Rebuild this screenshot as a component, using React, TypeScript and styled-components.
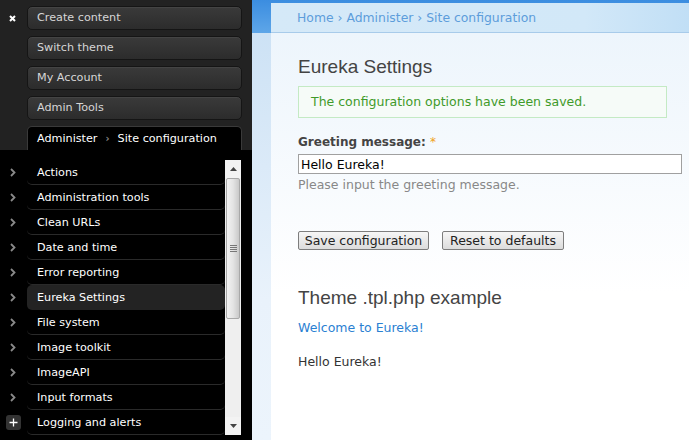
import styled, { createGlobalStyle } from "styled-components";

const GlobalStyle = createGlobalStyle`
  html, body {
    margin: 0;
    padding: 0;
    height: 100%;
    overflow: hidden;
  }
  #root {
    height: 100%;
  }
`;

const Page = styled.div`
  display: flex;
  height: 440px;
  width: 689px;
  overflow: hidden;
  font-family: "DejaVu Sans", Verdana, sans-serif;
`;

/* ---------- admin sidebar ---------- */

const Sidebar = styled.aside`
  width: 252px;
  flex-shrink: 0;
  display: flex;
  flex-direction: column;
  background: #000;
`;

const TopArea = styled.div`
  background: #222;
  display: flex;
  padding-top: 6px;
`;

const CloseCol = styled.div`
  width: 27px;
  display: flex;
  justify-content: center;
  padding-top: 9px;
  padding-right: 3px;
  box-sizing: border-box;
`;

const TopButtons = styled.div`
  flex: 1;
  display: flex;
  flex-direction: column;
  gap: 6px;
  padding-right: 10px;
`;

const TopButton = styled.div`
  height: 24px;
  box-sizing: border-box;
  border-radius: 5px;
  border: 1px solid #151515;
  background: linear-gradient(#3a3a3a, #2c2c2c);
  box-shadow: inset 0 1px 0 #444;
  color: #d6d6d6;
  font-size: 11.2px;
  line-height: 22px;
  padding-left: 9px;
`;

const ActiveTab = styled.div`
  height: 24px;
  box-sizing: border-box;
  border-radius: 5px 5px 0 0;
  border: 1px solid #3a3a3a;
  border-bottom: none;
  background: #000;
  color: #fff;
  font-size: 11.2px;
  line-height: 23px;
  padding-left: 9px;
  display: flex;
  align-items: center;
  gap: 8px;
`;

const TabSep = styled.span`
  color: #888;
  font-size: 10px;
  font-weight: bold;
`;

const ListArea = styled.div`
  flex: 1;
  display: flex;
  padding: 10px 11px 10px 0;
`;

const Rows = styled.ul`
  flex: 1;
  margin: 0;
  padding: 0;
  list-style: none;
`;

const Row = styled.li`
  height: 25px;
  display: flex;
  align-items: center;
`;

const Marker = styled.div`
  width: 27px;
  flex-shrink: 0;
  display: flex;
  justify-content: center;
  padding-right: 1px;
  box-sizing: border-box;
`;

const PlusBox = styled.div`
  width: 15px;
  height: 15px;
  border-radius: 3px;
  background: #333;
  display: flex;
  align-items: center;
  justify-content: center;
`;

const RowLabel = styled.div<{ $active?: boolean }>`
  flex: 1;
  height: 25px;
  box-sizing: border-box;
  padding-left: 10px;
  line-height: 25px;
  font-size: 11.2px;
  color: #fff;
  border-radius: ${(p) => (p.$active ? "5px" : "0 0 5px 5px")};
  border-bottom: 1px solid ${(p) => (p.$active ? "transparent" : "#2a2a2a")};
  background: ${(p) => (p.$active ? "#232323" : "transparent")};
`;

const Scrollbar = styled.div`
  width: 16px;
  display: flex;
  flex-direction: column;
  background: #eeeeee;
`;

const ScrollButton = styled.div`
  height: 18px;
  display: flex;
  align-items: center;
  justify-content: center;
  background: #f3f3f3;
`;

const Thumb = styled.div`
  height: 141px;
  margin: 0 1px;
  box-sizing: border-box;
  border: 1px solid #a8a8a8;
  border-radius: 2px;
  background: linear-gradient(to right, #f2f2f2, #e4e4e4 50%, #c9c9c9);
  display: flex;
  align-items: center;
  justify-content: center;
`;

const Track = styled.div`
  flex: 1;
  background: #efefef;
`;

/* ---------- content ---------- */

const Main = styled.main`
  flex: 1;
  display: flex;
  background:
    linear-gradient(to bottom, #3b8de0 0, #5ea6e8 33px, transparent 33px),
    linear-gradient(to bottom, #cde2f5 33px, #e9f2fb 300px, #ecf4fc);
`;

const Panel = styled.div`
  flex: 1;
  margin: 3px -30px 0 19px;
  display: flex;
  flex-direction: column;
`;

const Breadcrumb = styled.nav`
  height: 30px;
  box-sizing: border-box;
  border-bottom: 1px solid #a8cbea;
  background: linear-gradient(to right, #d5e9f8, #d2e8f8 70%, #bcdcf5);
  padding-left: 26px;
  font-size: 12.4px;
  line-height: 30px;
  color: #5d9ddb;
`;

const Body = styled.div`
  flex: 1;
  padding: 0 27px;
  background: linear-gradient(to bottom, #edf5fc, #ffffff 260px);
  color: #444;
  font-size: 12.5px;
`;

const Heading = styled.h2<{ $top: number }>`
  margin: ${(p) => p.$top}px 0 0;
  font-family: "Liberation Sans", Arial, sans-serif;
  font-weight: normal;
  font-size: 19px;
  line-height: 24px;
  color: #444;
`;

const Status = styled.div`
  margin-top: 7px;
  width: 369px;
  height: 32px;
  box-sizing: border-box;
  border: 1px solid #c4eac4;
  background: #f6fbf8;
  padding-left: 12px;
  line-height: 30px;
  color: #3f9a2a;
`;

const Label = styled.label`
  display: block;
  margin-top: 16px;
  font-weight: bold;
  font-size: 12px;
  line-height: 16px;
  color: #444;
`;

const Required = styled.span`
  color: #f0a020;
  font-weight: normal;
`;

const TextInput = styled.input`
  display: block;
  margin-top: 4px;
  width: 384px;
  height: 20px;
  box-sizing: border-box;
  border: 1px solid #a0a0a0;
  background: #fff;
  padding: 0 2px;
  font-family: "DejaVu Sans", Verdana, sans-serif;
  font-size: 12.5px;
  color: #000;
  outline: none;
`;

const Description = styled.div`
  margin-top: 3px;
  line-height: 16px;
  color: #888;
`;

const Actions = styled.div`
  margin-top: 38px;
  display: flex;
  gap: 13px;
`;

const Button = styled.button<{ $width: number }>`
  width: ${(p) => p.$width}px;
  height: 19px;
  padding: 0;
  border: 1px solid #7d7d7d;
  border-radius: 2px;
  background: linear-gradient(#f6f6f6, #dcdcdc);
  font-family: "DejaVu Sans", Verdana, sans-serif;
  font-size: 12.5px;
  line-height: 17px;
  color: #222;
`;

const Link = styled.a`
  display: block;
  margin-top: 10px;
  line-height: 16px;
  color: #2a80d2;
  text-decoration: none;
`;

const Paragraph = styled.p`
  margin: 18px 0 0;
  line-height: 16px;
  color: #333;
`;

const Chevron = () => (
  <svg width="6" height="9" viewBox="0 0 6 9">
    <path d="M1 1 L4.5 4.5 L1 8" fill="none" stroke="#8a8a8a" strokeWidth="1.8" />
  </svg>
);

const Plus = () => (
  <svg width="9" height="9" viewBox="0 0 9 9">
    <path d="M4.5 0.5 V8.5 M0.5 4.5 H8.5" stroke="#fff" strokeWidth="1.3" />
  </svg>
);

const CloseIcon = () => (
  <svg width="7" height="7" viewBox="0 0 7 7">
    <path d="M1 1 L6 6 M6 1 L1 6" stroke="#fff" strokeWidth="2" />
  </svg>
);

const Triangle = ({ up }: { up?: boolean }) => (
  <svg width="7" height="4" viewBox="0 0 7 4">
    <path d={up ? "M0 4 L3.5 0 L7 4 Z" : "M0 0 L3.5 4 L7 0 Z"} fill="#444" />
  </svg>
);

const Grip = () => (
  <svg width="7" height="7" viewBox="0 0 7 7">
    <path d="M0 0.5 H7 M0 2.5 H7 M0 4.5 H7 M0 6.5 H7" stroke="#777" strokeWidth="1" />
  </svg>
);

const topLinks = ["Create content", "Switch theme", "My Account", "Admin Tools"];

const items = [
  "Actions",
  "Administration tools",
  "Clean URLs",
  "Date and time",
  "Error reporting",
  "Eureka Settings",
  "File system",
  "Image toolkit",
  "ImageAPI",
  "Input formats",
  "Logging and alerts",
];

export default function App() {
  return (
    <>
      <GlobalStyle />
      <Page>
        <Sidebar>
          <TopArea>
            <CloseCol>
              <CloseIcon />
            </CloseCol>
            <TopButtons>
              {topLinks.map((t) => (
                <TopButton key={t}>{t}</TopButton>
              ))}
              <ActiveTab>
                Administer <TabSep>›</TabSep> Site configuration
              </ActiveTab>
            </TopButtons>
          </TopArea>
          <ListArea>
            <Rows>
              {items.map((name) => (
                <Row key={name}>
                  <Marker>
                    {name === "Logging and alerts" ? (
                      <PlusBox>
                        <Plus />
                      </PlusBox>
                    ) : (
                      <Chevron />
                    )}
                  </Marker>
                  <RowLabel $active={name === "Eureka Settings"}>{name}</RowLabel>
                </Row>
              ))}
            </Rows>
            <Scrollbar>
              <ScrollButton>
                <Triangle up />
              </ScrollButton>
              <Thumb>
                <Grip />
              </Thumb>
              <Track />
              <ScrollButton>
                <Triangle />
              </ScrollButton>
            </Scrollbar>
          </ListArea>
        </Sidebar>
        <Main>
          <Panel>
            <Breadcrumb>Home › Administer › Site configuration</Breadcrumb>
            <Body>
              <Heading $top={22}>Eureka Settings</Heading>
              <Status>The configuration options have been saved.</Status>
              <Label>
                Greeting message: <Required>*</Required>
              </Label>
              <TextInput defaultValue="Hello Eureka!" />
              <Description>Please input the greeting message.</Description>
              <Actions>
                <Button $width={131}>Save configuration</Button>
                <Button $width={122}>Reset to defaults</Button>
              </Actions>
              <Heading $top={36}>Theme .tpl.php example</Heading>
              <Link href="#">Welcome to Eureka!</Link>
              <Paragraph>Hello Eureka!</Paragraph>
            </Body>
          </Panel>
        </Main>
      </Page>
    </>
  );
}
